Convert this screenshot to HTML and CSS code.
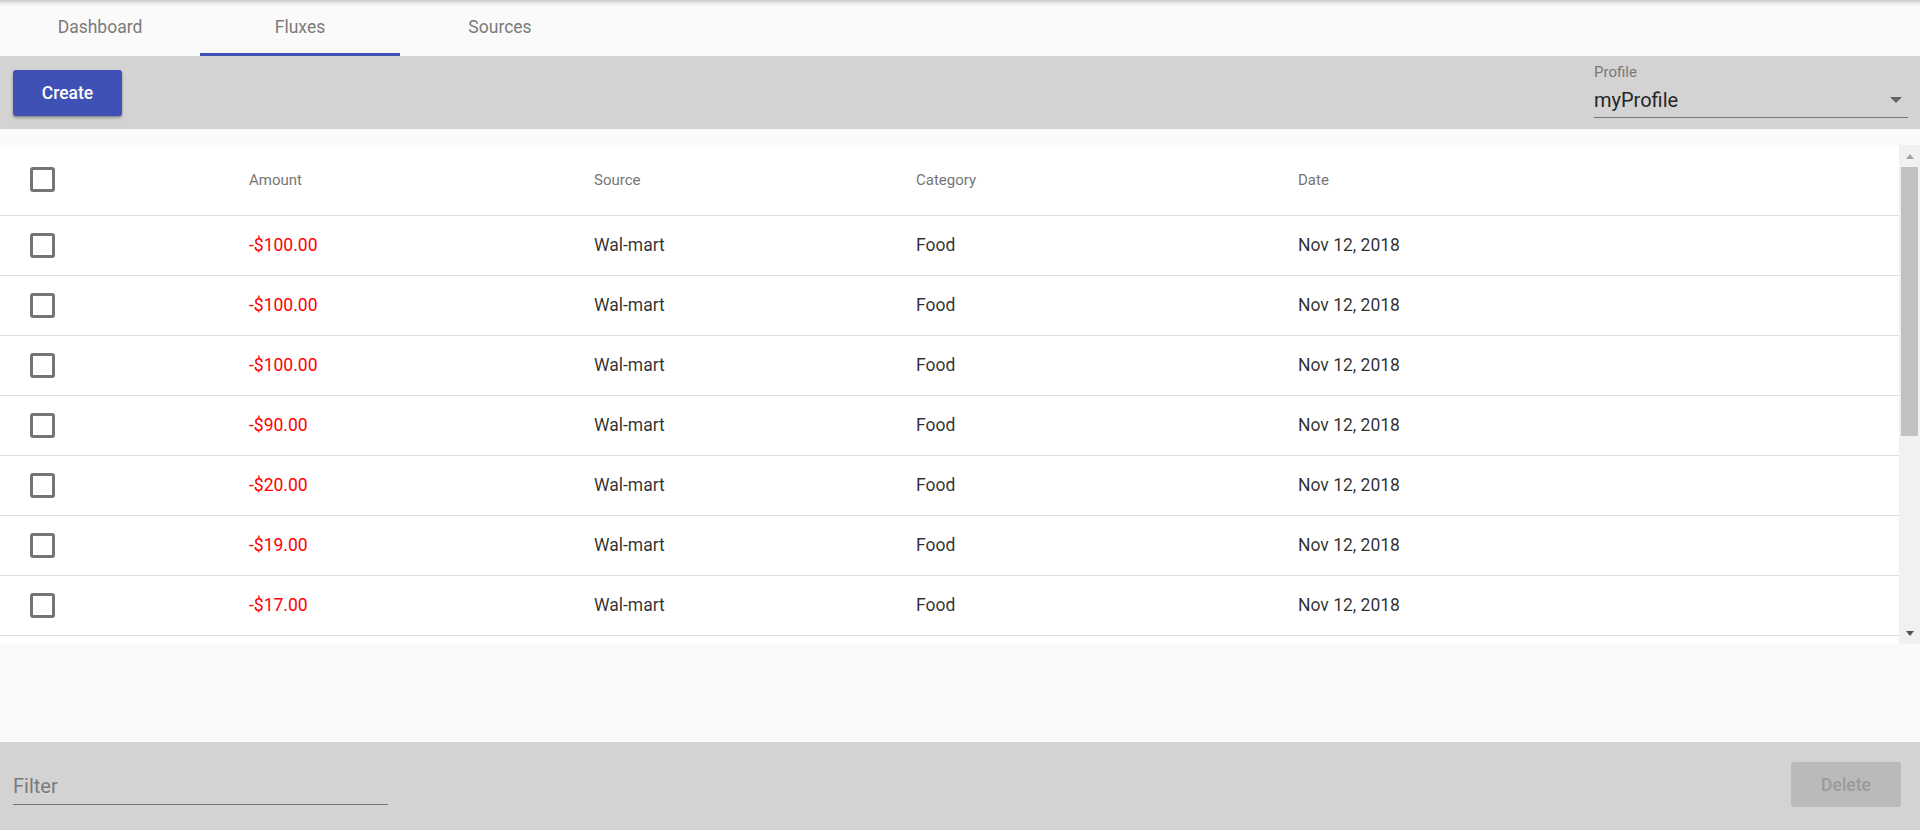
FILE: index.html
```html
<!DOCTYPE html>
<html lang="en">
<head>
<meta charset="utf-8">
<title>Fluxes</title>
<link rel="stylesheet" href="styles.css">
</head>
<body>
<nav class="tabs">
  <div class="tab">Dashboard</div>
  <div class="tab active">Fluxes</div>
  <div class="tab">Sources</div>
</nav>
<div class="toolbar">
  <button class="btn btn-primary">Create</button>
  <div class="select">
    <div class="select-label">Profile</div>
    <div class="select-value"><span>myProfile</span><span class="caret"></span></div>
  </div>
</div>
<main class="content">
  <div class="table-card">
    <div class="table-viewport">
      <table class="grid">
        <colgroup>
          <col class="c-check"><col class="c-amount"><col class="c-source"><col class="c-category"><col>
        </colgroup>
        <thead>
          <tr><th class="check-cell"><span class="checkbox"></span></th><th>Amount</th><th>Source</th><th>Category</th><th>Date</th></tr>
        </thead>
        <tbody>
          <tr><td class="check-cell"><span class="checkbox"></span></td><td class="neg">-$100.00</td><td>Wal-mart</td><td>Food</td><td>Nov 12, 2018</td></tr>
          <tr><td class="check-cell"><span class="checkbox"></span></td><td class="neg">-$100.00</td><td>Wal-mart</td><td>Food</td><td>Nov 12, 2018</td></tr>
          <tr><td class="check-cell"><span class="checkbox"></span></td><td class="neg">-$100.00</td><td>Wal-mart</td><td>Food</td><td>Nov 12, 2018</td></tr>
          <tr><td class="check-cell"><span class="checkbox"></span></td><td class="neg">-$90.00</td><td>Wal-mart</td><td>Food</td><td>Nov 12, 2018</td></tr>
          <tr><td class="check-cell"><span class="checkbox"></span></td><td class="neg">-$20.00</td><td>Wal-mart</td><td>Food</td><td>Nov 12, 2018</td></tr>
          <tr><td class="check-cell"><span class="checkbox"></span></td><td class="neg">-$19.00</td><td>Wal-mart</td><td>Food</td><td>Nov 12, 2018</td></tr>
          <tr><td class="check-cell"><span class="checkbox"></span></td><td class="neg">-$17.00</td><td>Wal-mart</td><td>Food</td><td>Nov 12, 2018</td></tr>
        </tbody>
      </table>
    </div>
    <div class="scrollbar">
      <div class="sb-btn"><span class="sb-up"></span></div>
      <div class="sb-thumb"></div>
      <div class="sb-space"></div>
      <div class="sb-btn"><span class="sb-down"></span></div>
    </div>
  </div>
</main>
<footer class="footer">
  <div class="filter">Filter</div>
  <button class="btn btn-disabled">Delete</button>
</footer>
</body>
</html>
```

FILE: styles.css
```css
* { box-sizing: border-box; }
html, body { margin: 0; }
body {
  font-family: Roboto, "Noto Sans", sans-serif;
  background: #fafafa;
  color: rgba(0, 0, 0, 0.82);
  display: flex;
  flex-direction: column;
  height: 830px;
  overflow: hidden;
}

.tabs {
  flex: none;
  display: flex;
  height: 56px;
  background: linear-gradient(rgba(0, 0, 0, 0.2), rgba(0, 0, 0, 0.04) 4px, rgba(0, 0, 0, 0) 7px), #fafafa;
}
.tab {
  width: 200px;
  display: flex;
  align-items: center;
  justify-content: center;
  border-bottom: 3px solid transparent;
  font-size: 17.5px;
  line-height: 20px;
  color: #7b7b7b;
}
.tab.active { border-bottom-color: #3f51b5; }

.toolbar {
  flex: none;
  height: 73px;
  background: #d3d3d3;
  display: flex;
  justify-content: space-between;
  align-items: flex-start;
  padding: 0 12px 0 13px;
}
.btn {
  font-family: inherit;
  font-size: 17.5px;
  font-weight: 500;
  border: 0;
  border-radius: 3px;
  height: 45px;
  width: 109px;
  padding: 0;
}
.btn-primary {
  margin-top: 14px;
  height: 46px;
  background: #3f51b5;
  color: #fff;
  box-shadow: 0 2px 3px rgba(0, 0, 0, 0.25), 0 1px 2px rgba(0, 0, 0, 0.15);
}
.select { margin-top: 7px; width: 314px; }
.select-label { font-size: 15px; line-height: 18px; color: #777; }
.select-value {
  margin-top: 7px;
  display: flex;
  align-items: center;
  justify-content: space-between;
  font-size: 20px;
  line-height: 24px;
  color: #262626;
  padding-bottom: 5px;
  border-bottom: 1px solid #767676;
}
.caret {
  width: 0;
  height: 0;
  border-left: 6.5px solid transparent;
  border-right: 6.5px solid transparent;
  border-top: 6px solid #666;
  margin-right: 6px;
}

.content { flex: 1; padding-top: 16px; }
.table-card { height: 499px; display: flex; background: #fff; }
.table-viewport { flex: 1; overflow: hidden; }
.grid { width: 100%; border-collapse: collapse; table-layout: fixed; }
.c-check { width: 249px; }
.c-amount { width: 345px; }
.c-source { width: 322px; }
.c-category { width: 382px; }
.grid th {
  height: 70px;
  padding: 0;
  font-size: 15px;
  font-weight: 400;
  color: #757575;
  text-align: left;
  border-bottom: 1px solid #e0e0e0;
}
.grid td {
  height: 60px;
  padding: 0;
  font-size: 17.5px;
  border-bottom: 1px solid #e0e0e0;
}
.grid .check-cell { padding-left: 30px; }
.checkbox {
  display: block;
  width: 25px;
  height: 25px;
  border: 3px solid #757575;
  border-radius: 3px;
}
.grid td.neg { color: #ff0000; }

.scrollbar {
  width: 21px;
  background: #f1f1f1;
  display: flex;
  flex-direction: column;
}
.sb-btn {
  height: 22px;
  display: flex;
  align-items: center;
  justify-content: center;
}
.sb-up, .sb-down {
  width: 0;
  height: 0;
  border-left: 4.5px solid transparent;
  border-right: 4.5px solid transparent;
}
.sb-up { border-bottom: 5px solid #a3a3a3; }
.sb-down { border-top: 5px solid #505050; }
.sb-thumb { height: 269px; margin: 0 2px; background: #c1c1c1; }
.sb-space { flex: 1; }

.footer {
  flex: none;
  height: 88px;
  background: #d3d3d3;
  display: flex;
  justify-content: space-between;
  align-items: flex-start;
  padding: 0 19px 0 13px;
}
.filter {
  margin-top: 32px;
  width: 375px;
  font-size: 20px;
  line-height: 24px;
  color: #7a7a7a;
  padding-bottom: 6px;
  border-bottom: 1px solid #767676;
}
.btn-disabled {
  margin-top: 20px;
  width: 110px;
  background: #bababa;
  color: #9a9a9a;
}
```
